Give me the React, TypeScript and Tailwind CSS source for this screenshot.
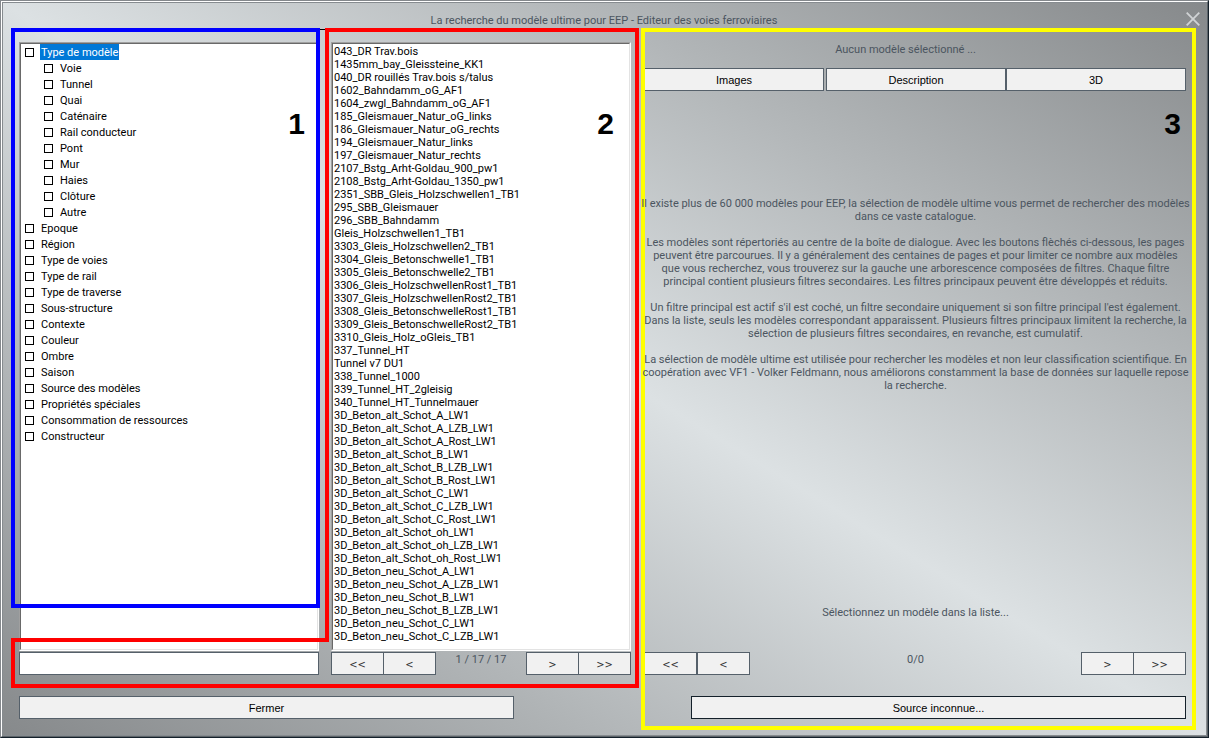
import { useState } from "react";

type FilterGroup = {
  name: string;
  children?: string[];
};

const FILTERS: FilterGroup[] = [
  {
    name: "Type de modèle",
    children: [
      "Voie",
      "Tunnel",
      "Quai",
      "Caténaire",
      "Rail conducteur",
      "Pont",
      "Mur",
      "Haies",
      "Clôture",
      "Autre",
    ],
  },
  { name: "Epoque" },
  { name: "Région" },
  { name: "Type de voies" },
  { name: "Type de rail" },
  { name: "Type de traverse" },
  { name: "Sous-structure" },
  { name: "Contexte" },
  { name: "Couleur" },
  { name: "Ombre" },
  { name: "Saison" },
  { name: "Source des modèles" },
  { name: "Propriétés spéciales" },
  { name: "Consommation de ressources" },
  { name: "Constructeur" },
];

const MODELS = [
  "043_DR Trav.bois",
  "1435mm_bay_Gleissteine_KK1",
  "040_DR rouillés Trav.bois s/talus",
  "1602_Bahndamm_oG_AF1",
  "1604_zwgl_Bahndamm_oG_AF1",
  "185_Gleismauer_Natur_oG_links",
  "186_Gleismauer_Natur_oG_rechts",
  "194_Gleismauer_Natur_links",
  "197_Gleismauer_Natur_rechts",
  "2107_Bstg_Arht-Goldau_900_pw1",
  "2108_Bstg_Arht-Goldau_1350_pw1",
  "2351_SBB_Gleis_Holzschwellen1_TB1",
  "295_SBB_Gleismauer",
  "296_SBB_Bahndamm",
  "Gleis_Holzschwellen1_TB1",
  "3303_Gleis_Holzschwellen2_TB1",
  "3304_Gleis_Betonschwelle1_TB1",
  "3305_Gleis_Betonschwelle2_TB1",
  "3306_Gleis_HolzschwellenRost1_TB1",
  "3307_Gleis_HolzschwellenRost2_TB1",
  "3308_Gleis_BetonschwelleRost1_TB1",
  "3309_Gleis_BetonschwelleRost2_TB1",
  "3310_Gleis_Holz_oGleis_TB1",
  "337_Tunnel_HT",
  "Tunnel v7 DU1",
  "338_Tunnel_1000",
  "339_Tunnel_HT_2gleisig",
  "340_Tunnel_HT_Tunnelmauer",
  "3D_Beton_alt_Schot_A_LW1",
  "3D_Beton_alt_Schot_A_LZB_LW1",
  "3D_Beton_alt_Schot_A_Rost_LW1",
  "3D_Beton_alt_Schot_B_LW1",
  "3D_Beton_alt_Schot_B_LZB_LW1",
  "3D_Beton_alt_Schot_B_Rost_LW1",
  "3D_Beton_alt_Schot_C_LW1",
  "3D_Beton_alt_Schot_C_LZB_LW1",
  "3D_Beton_alt_Schot_C_Rost_LW1",
  "3D_Beton_alt_Schot_oh_LW1",
  "3D_Beton_alt_Schot_oh_LZB_LW1",
  "3D_Beton_alt_Schot_oh_Rost_LW1",
  "3D_Beton_neu_Schot_A_LW1",
  "3D_Beton_neu_Schot_A_LZB_LW1",
  "3D_Beton_neu_Schot_B_LW1",
  "3D_Beton_neu_Schot_B_LZB_LW1",
  "3D_Beton_neu_Schot_C_LW1",
  "3D_Beton_neu_Schot_C_LZB_LW1",
];

const HELP = [
  [
    "Il existe plus de 60 000 modèles pour EEP, la sélection de modèle ultime vous permet de rechercher des modèles",
    "dans ce vaste catalogue.",
  ],
  [
    "Les modèles sont répertoriés au centre de la boîte de dialogue. Avec les boutons flèchés ci-dessous, les pages",
    "peuvent être parcourues. Il y a généralement des centaines de pages et pour limiter ce nombre aux modèles",
    "que vous recherchez, vous trouverez sur la gauche une arborescence composées de filtres. Chaque filtre",
    "principal contient plusieurs filtres secondaires. Les filtres principaux peuvent être développés et réduits.",
  ],
  [
    "Un filtre principal est actif s'il est coché, un filtre secondaire uniquement si son filtre principal l'est également.",
    "Dans la liste, seuls les modèles correspondant apparaissent. Plusieurs filtres principaux limitent la recherche, la",
    "sélection de plusieurs filtres secondaires, en revanche, est cumulatif.",
  ],
  [
    "La sélection de modèle ultime est utilisée pour rechercher les modèles et non leur classification scientifique. En",
    "coopération avec VF1 - Volker Feldmann, nous améliorons constamment la base de données sur laquelle repose",
    "la recherche.",
  ],
];

const BUTTON =
  "h-[23px] border border-[#55606a] bg-[#f1f1f1] pt-px font-['Liberation_Sans',sans-serif] text-black";
const NAV_BUTTON =
  "h-[23px] w-[53px] border border-[#55606a] bg-[#f1f1f1] pt-px font-['DejaVu_Sans_Condensed','DejaVu_Sans',sans-serif] text-[#333]";

// Sunken two-pixel frame of the list boxes
function Sunken({ children }: { children: React.ReactNode }) {
  return (
    <div className="flex flex-1 flex-col border border-t-[#a0a0a0] border-r-white border-b-white border-l-[#a0a0a0]">
      <div className="flex-1 border border-t-[#696969] border-r-[#e3e3e3] border-b-[#e3e3e3] border-l-[#696969] bg-white text-black">
        {children}
      </div>
    </div>
  );
}

function Check({ name, selected }: { name: string; selected?: boolean }) {
  return (
    <label className="flex h-4 items-center gap-1.5">
      <input
        type="checkbox"
        className="size-[9px] appearance-none border border-black bg-white checked:bg-black"
      />
      <span
        className={
          selected
            ? "bg-[#0078d7] px-px pt-0.5 leading-[14px] text-white"
            : "px-px pt-0.5 leading-[14px]"
        }
      >
        {name}
      </span>
    </label>
  );
}

function FilterTree() {
  return (
    <ul className="pl-1">
      {FILTERS.map((group, i) => (
        <li key={group.name}>
          <Check name={group.name} selected={i === 0} />
          {group.children && (
            <ul className="pl-[19px]">
              {group.children.map((child) => (
                <li key={child}>
                  <Check name={child} />
                </li>
              ))}
            </ul>
          )}
        </li>
      ))}
    </ul>
  );
}

function Mark({ label }: { label: string }) {
  return (
    <span className="font-['Liberation_Sans',sans-serif] text-3xl leading-8 font-bold text-black">
      {label}
    </span>
  );
}

export default function App() {
  const [search, setSearch] = useState<string>("");

  return (
    <div className="flex min-h-screen flex-col border border-t-[#84888c] border-r-[#14202a] border-b-[#14202a] border-l-[#84888c] font-[Roboto,sans-serif] text-[11px] leading-[13px] text-[#4b5560]">
      <div className="flex flex-1 flex-col border border-t-white border-r-[#5c6368] border-b-[#5c6368] border-l-white bg-[linear-gradient(to_top_right,#86898b,#dce1e3_50%,#86898b)] shadow-[inset_0_0_0_1px_#868b8f]">
        <header className="flex h-[26px] items-center pt-2">
          <h1 className="flex-1 pt-0.5 pl-5 text-center">
            La recherche du modèle ultime pour EEP - Editeur des voies
            ferroviaires
          </h1>
          <button aria-label="Fermer la fenêtre" className="mr-[7px]">
            <svg viewBox="0 0 14 14" className="size-3.5">
              <path
                d="M0.7 0.7 13.3 13.3M13.3 0.7 0.7 13.3"
                stroke="#d0d3d5"
                strokeWidth="1.8"
              />
            </svg>
          </button>
        </header>

        <main className="flex flex-1">
          <div className="relative mt-px ml-[9px] flex w-[628px] shrink-0 flex-col border-t border-black pt-3 pb-[17px] pl-2">
            <div className="flex flex-1 gap-3">
              <section className="flex w-[300px] flex-col gap-px">
                <Sunken>
                  <FilterTree />
                </Sunken>
                <input
                  type="text"
                  aria-label="Recherche"
                  value={search}
                  onChange={(e: React.ChangeEvent<HTMLInputElement>) =>
                    setSearch(e.target.value)
                  }
                  className="h-[23px] border border-[#55606a] bg-white px-1 text-black outline-none"
                />
              </section>

              <section className="flex w-[300px] flex-col gap-px">
                <Sunken>
                  <ul className="pt-px pl-px">
                    {MODELS.map((model) => (
                      <li key={model}>{model}</li>
                    ))}
                  </ul>
                </Sunken>
                <div className="flex justify-between">
                  <div className="flex -space-x-px">
                    <button className={NAV_BUTTON}>&lt;&lt;</button>
                    <button className={NAV_BUTTON}>&lt;</button>
                  </div>
                  <span className="pt-px">1 / 17 / 17</span>
                  <div className="flex -space-x-px">
                    <button className={NAV_BUTTON}>&gt;</button>
                    <button className={NAV_BUTTON}>&gt;&gt;</button>
                  </div>
                </div>
              </section>
            </div>
            <button className={`${BUTTON} mt-[21px] w-[495px]`}>Fermer</button>

            {/* Zone 1: filters, zone 2: search field and list */}
            <div className="pointer-events-none absolute -top-0.5 bottom-[128px] left-0 w-[309px] border-4 border-[#0000ff] pt-[76px] pr-[11px] text-right">
              <Mark label="1" />
            </div>
            <div className="pointer-events-none absolute -top-0.5 right-0 bottom-[48px] w-[314px] border-4 border-b-0 border-l-0 border-[#ff0000] pt-[76px] pr-[21px] text-right">
              <Mark label="2" />
            </div>
            <div className="pointer-events-none absolute -top-0.5 bottom-[94px] left-[314px] w-1 bg-[#ff0000]" />
            <div className="pointer-events-none absolute bottom-[48px] left-0 h-[50px] w-[318px] border-4 border-r-0 border-[#ff0000]" />
            <div className="pointer-events-none absolute right-0 bottom-[48px] h-1 w-[314px] bg-[#ff0000]" />
          </div>

          <section className="relative mr-[11px] mb-[6px] ml-0.5 flex min-w-0 flex-1 flex-col border-4 border-[#ffff00] pt-[11px] pr-1.5 pb-[7px] text-center">
            <div className="pointer-events-none absolute top-[76px] right-[11px]">
              <Mark label="3" />
            </div>
            <p className="pr-5">Aucun modèle sélectionné ...</p>
            <div className="mt-3 grid grid-cols-[1fr_180px_180px]">
              <button className={`${BUTTON} mr-0.5 border-l-0`}>Images</button>
              <button className={BUTTON}>Description</button>
              <button className={BUTTON}>3D</button>
            </div>

            <div className="mt-[106px] flex flex-col items-center gap-[13px]">
              {HELP.map((lines) => (
                <p key={lines[0]} className="whitespace-nowrap">
                  {lines.map((line) => (
                    <span key={line} className="block">
                      {line}
                    </span>
                  ))}
                </p>
              ))}
            </div>

            <p className="mt-auto">Sélectionnez un modèle dans la liste...</p>
            <div className="mt-[33px] grid grid-cols-[105px_1fr_105px]">
              <div className="flex">
                <button className="h-[23px] w-[52px] border border-l-0 border-[#55606a] bg-[#f1f1f1] pt-px font-['DejaVu_Sans_Condensed','DejaVu_Sans',sans-serif] text-[#333]">
                  &lt;&lt;
                </button>
                <button className={NAV_BUTTON}>&lt;</button>
              </div>
              <span className="pt-px">0/0</span>
              <div className="flex -space-x-px">
                <button className={NAV_BUTTON}>&gt;</button>
                <button className={NAV_BUTTON}>&gt;&gt;</button>
              </div>
            </div>
            <button className="mt-[21px] h-[23px] w-[495px] self-end border border-[#14202a] bg-[#f1f1f1] pt-px font-['Liberation_Sans',sans-serif] text-black">
              Source inconnue...
            </button>
          </section>
        </main>
      </div>
    </div>
  );
}
